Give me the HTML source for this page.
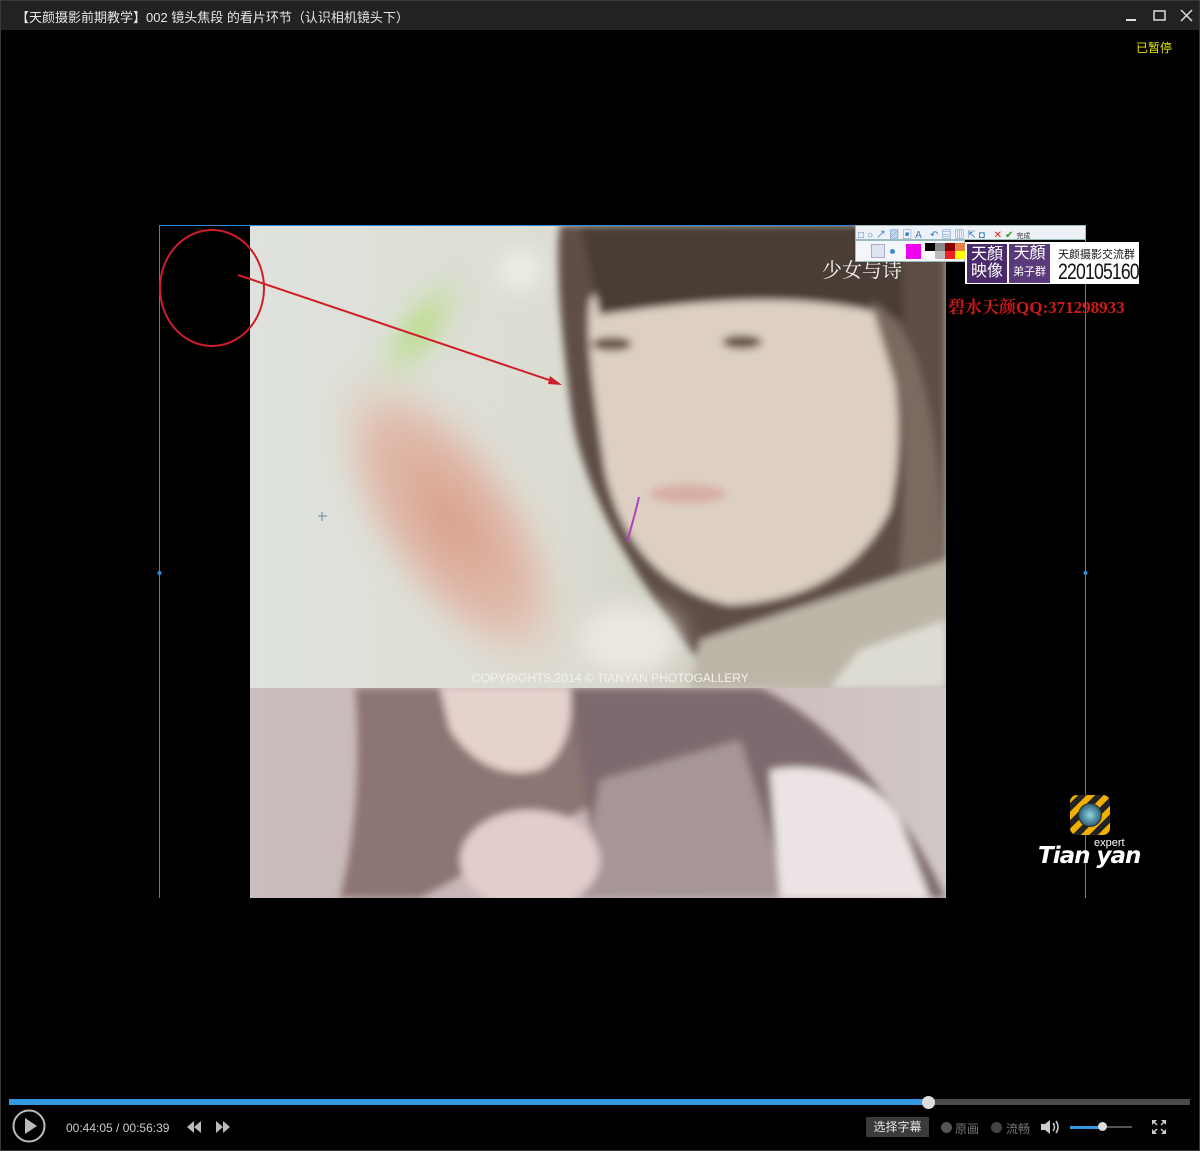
<!DOCTYPE html>
<html><head><meta charset="utf-8">
<style>
*{margin:0;padding:0;box-sizing:border-box}
body{width:1200px;height:1151px;background:#000;position:relative;overflow:hidden;font-family:"Liberation Sans","Noto Sans CJK SC",sans-serif}
.abs{position:absolute}
#title{left:0;top:0;width:1200px;height:30px;background:#222224;border:1px solid #3a3a3a;border-bottom:none}
#title span{position:absolute;left:15px;top:6px;color:#e6e6e6;font-size:13px;white-space:nowrap}
#frame{left:0;top:30px;width:1200px;height:1121px;border:1px solid #3a3a3a;border-top:none}
.t{color:#ccc;font-size:12px;white-space:nowrap}
</style></head><body>
<div id="title" class="abs"><span>【天颜摄影前期教学】002 镜头焦段 的看片环节（认识相机镜头下）</span>
<svg class="abs" style="left:1120px;top:6px" width="75" height="18">
<line x1="5" y1="13" x2="15" y2="13" stroke="#ddd" stroke-width="2"/>
<rect x="33" y="4" width="11" height="9" fill="none" stroke="#ddd" stroke-width="1.5"/>
<line x1="60" y1="3" x2="71" y2="14" stroke="#ddd" stroke-width="1.5"/><line x1="71" y1="3" x2="60" y2="14" stroke="#ddd" stroke-width="1.5"/>
</svg></div>
<div id="frame" class="abs"></div>
<div class="abs" style="left:1136px;top:39px;color:#e8e800;font-size:12px">已暂停</div>

<svg class="abs" style="left:0;top:0" width="1200" height="1151">
<defs>
<linearGradient id="bg1" x1="0" y1="0" x2="1" y2="0"><stop offset="0" stop-color="#dfe3dd"/><stop offset=".45" stop-color="#dcdcd2"/><stop offset="1" stop-color="#b8b5a6"/></linearGradient>
<radialGradient id="hand" cx=".5" cy=".5" r=".5"><stop offset="0" stop-color="#d9a08c"/><stop offset=".6" stop-color="#e0bcac"/><stop offset="1" stop-color="#e2d8cf" stop-opacity="0"/></radialGradient>
<radialGradient id="leaf" cx=".5" cy=".5" r=".5"><stop offset="0" stop-color="#a6d860"/><stop offset="1" stop-color="#cfe4b8" stop-opacity="0"/></radialGradient>
<linearGradient id="bg2" x1="0" y1="0" x2="1" y2="0"><stop offset="0" stop-color="#cbbdbd"/><stop offset=".5" stop-color="#c9b4b4"/><stop offset="1" stop-color="#d2c8c8"/></linearGradient>
<filter id="b4"><feGaussianBlur stdDeviation="4"/></filter>
<filter id="b12"><feGaussianBlur stdDeviation="12"/></filter>
<clipPath id="c1"><rect x="250" y="225" width="696" height="463"/></clipPath>
<clipPath id="c2"><rect x="250" y="688" width="696" height="210"/></clipPath>
</defs>
<g clip-path="url(#c1)">
<rect x="250" y="225" width="696" height="463" fill="url(#bg1)"/>
<g filter="url(#b4)">
<path d="M560 225 L946 225 L946 688 L720 688 C650 600 580 500 570 400 C560 320 555 260 560 225Z" fill="#5e4e46"/>
<path d="M590 300 C620 250 800 250 870 300 C900 360 905 440 890 510 C860 570 810 600 730 605 C660 590 620 540 605 470 C595 400 585 340 590 300Z" fill="#ddd0c2"/>
<path d="M580 225 L900 225 L905 320 C840 300 760 290 600 315Z" fill="#4a3c36"/>
<path d="M870 300 C920 330 946 400 946 688 L880 688 C900 600 910 500 900 400Z" fill="#7a6a60"/>
<path d="M700 640 L946 560 L946 688 L690 688Z" fill="#bdb6a8"/>
<path d="M860 650 L946 620 L946 688 L830 688Z" fill="#deddd4"/>
<ellipse cx="742" cy="342" rx="20" ry="7" fill="#6b5548"/><ellipse cx="612" cy="344" rx="20" ry="7" fill="#6b5548"/>
<ellipse cx="688" cy="494" rx="38" ry="10" fill="#d8aea4"/>
</g>
<g filter="url(#b12)">
<ellipse cx="450" cy="520" rx="190" ry="85" fill="url(#hand)" transform="rotate(55 450 520)"/>
<ellipse cx="420" cy="330" rx="28" ry="80" fill="url(#leaf)" transform="rotate(35 420 330)"/>
<ellipse cx="630" cy="640" rx="50" ry="35" fill="#ece8e0"/>
<circle cx="520" cy="270" r="20" fill="#f0f0ea"/>
</g>
</g>
<g clip-path="url(#c2)">
<rect x="250" y="688" width="696" height="210" fill="url(#bg2)"/>
<g filter="url(#b4)">
<path d="M355 688 L560 688 C600 720 610 760 600 800 L420 898 L340 898 C360 820 360 740 355 688Z" fill="#8c7472"/>
<path d="M440 688 L570 688 C575 730 560 760 540 770 C500 780 470 760 450 730Z" fill="#e6d2cc"/>
<path d="M570 688 L760 688 C830 720 900 800 946 898 L600 898 C590 820 580 760 570 688Z" fill="#7e6a6e"/>
<path d="M600 780 L740 740 L790 898 L580 898Z" fill="#a69696"/>
<path d="M770 770 C820 760 880 780 900 820 L930 898 L780 898Z" fill="#ece4e4"/>
<ellipse cx="530" cy="860" rx="70" ry="50" fill="#e2cccc"/>
</g>
</g>
<text x="472" y="682" font-size="12" fill="#f4f2ee" font-family="Liberation Sans">COPYRIGHTS.2014 © TIANYAN PHOTOGALLERY</text>
<text x="822" y="277" font-size="20" fill="#f6f4f0" font-family="Noto Serif CJK SC,serif">少女与诗</text>
<line x1="159.5" y1="225" x2="159.5" y2="898" stroke="#2f8ad8" stroke-width="1"/>
<line x1="1085.5" y1="225" x2="1085.5" y2="898" stroke="#2f8ad8" stroke-width="1"/>
<line x1="159" y1="225.5" x2="1086" y2="225.5" stroke="#2f8ad8" stroke-width="1"/>
<circle cx="159.5" cy="573" r="2" fill="#2f8ad8"/><circle cx="1085.5" cy="573" r="2" fill="#2f8ad8"/>
<ellipse cx="212" cy="288" rx="52" ry="58" fill="none" stroke="#d01e28" stroke-width="2"/>
<line x1="238" y1="275" x2="558" y2="383" stroke="#d01e28" stroke-width="2"/>
<path d="M562 385 L550 376 L548 384Z" fill="#d01e28"/>
<path d="M639 497 C636 510 632 525 627 542" stroke="#b040c0" stroke-width="2" fill="none"/>
<path d="M322 512 v9 M318 516 h9" stroke="#6a8aa0" stroke-width="1"/>
</svg>

<div class="abs" style="left:855px;top:225px;width:231px;height:15px;background:#eef2f7;border:1px solid #9bb"></div>
<div class="abs t" style="left:858px;top:226px;font-size:10px;color:#3a7ac0;letter-spacing:3px">□○↗▨▣A ↶▤▥⇱◘ <span style="color:#d22">✕</span><span style="color:#2a2">✔</span><span style="color:#333;letter-spacing:0;font-size:7px">完成</span></div>
<div class="abs" style="left:855px;top:240px;width:110px;height:22px;background:#f4f6f9;border:1px solid #9bb"></div>
<div class="abs" style="left:871px;top:244px;width:14px;height:14px;background:#dde6f0;border:1px solid #aac"></div>
<div class="abs" style="left:890px;top:249px;width:5px;height:5px;border-radius:50%;background:#3a8fd8"></div>
<div class="abs" style="left:906px;top:244px;width:15px;height:15px;background:#f000f0"></div>
<div class="abs" style="left:925px;top:243px;width:40px;height:16px;background:linear-gradient(90deg,#000 0 25%,#888 25% 50%,#800 50% 75%,#e98040 75%)"></div>
<div class="abs" style="left:925px;top:251px;width:40px;height:8px;background:linear-gradient(90deg,#fff 0 25%,#bbb 25% 50%,#e22 50% 75%,#ff0 75%)"></div>
<div class="abs" style="left:965px;top:242px;width:174px;height:42px;background:#fff"></div>
<div class="abs" style="left:967px;top:244px;width:40px;height:39px;background:#4a2a6a;color:#fff;font-size:16px;line-height:17px;text-align:center;padding-top:2px">天顏<br>映像</div>
<div class="abs" style="left:1009px;top:244px;width:41px;height:39px;background:#5a3a7a;color:#fff;font-size:16px;line-height:17px;text-align:center;padding-top:1px">天顏<br><span style="font-size:11px">弟子群</span></div>
<div class="abs" style="left:1058px;top:246px;color:#111;font-size:11px">天颜摄影交流群</div>
<div class="abs" style="left:1058px;top:259px;color:#111;font-size:22px;letter-spacing:-1px;transform:scaleX(.8);transform-origin:left">220105160</div>
<div class="abs" style="left:948px;top:293px;color:#d01818;font-size:17px;font-weight:bold;font-family:'Liberation Serif','Noto Serif CJK SC',serif">碧水天颜QQ:371298933</div>

<div class="abs" style="left:1070px;top:795px;width:40px;height:40px;border-radius:7px;background:repeating-linear-gradient(135deg,#f0b000 0 6px,#222 6px 12px)"></div>
<div class="abs" style="left:1078px;top:803px;width:24px;height:24px;border-radius:50%;background:radial-gradient(#8cd8e8,#3a6a80 60%,#222 70%)"></div>
<div class="abs" style="left:1094px;top:837px;color:#fff;font-size:11px">expert</div>
<div class="abs" style="left:1038px;top:843px;color:#fff;font-size:23px;font-style:italic;font-weight:bold;font-family:'DejaVu Sans',sans-serif;letter-spacing:-1px">Tian yan</div>

<div class="abs" style="left:9px;top:1099px;width:1181px;height:6px;background:#4a4a4c"></div>
<div class="abs" style="left:9px;top:1099px;width:919px;height:6px;background:#3399e0"></div>
<div class="abs" style="left:922px;top:1096px;width:13px;height:13px;border-radius:50%;background:#ddd"></div>
<svg class="abs" style="left:12px;top:1109px" width="36" height="36"><circle cx="17" cy="17" r="15.5" fill="none" stroke="#bbb" stroke-width="2"/><path d="M13 9 L25 17 L13 25Z" fill="#bbb"/></svg>
<div class="abs t" style="left:66px;top:1121px">00:44:05 / 00:56:39</div>
<svg class="abs" style="left:186px;top:1120px" width="48" height="16"><path d="M1 7 L8 1 V13Z M8 7 L15 1 V13Z M30 1 L37 7 L30 13Z M37 1 L44 7 L37 13Z" fill="#bbb"/></svg>
<div class="abs" style="left:866px;top:1117px;width:63px;height:20px;background:#3a3a3c;color:#e6e6e6;font-size:12px;text-align:center;line-height:20px">选择字幕</div>
<div class="abs" style="left:941px;top:1122px;width:11px;height:11px;border-radius:50%;background:#555"></div>
<div class="abs t" style="left:955px;top:1120px;color:#777">原画</div>
<div class="abs" style="left:991px;top:1122px;width:11px;height:11px;border-radius:50%;background:#444"></div>
<div class="abs t" style="left:1006px;top:1120px;color:#777">流畅</div>
<svg class="abs" style="left:1040px;top:1119px" width="22" height="16"><path d="M1 5 H5 L10 1 V15 L5 11 H1Z" fill="#ccc"/><path d="M13 4 Q16 8 13 12 M16 2 Q20 8 16 14" stroke="#ccc" stroke-width="1.5" fill="none"/></svg>
<div class="abs" style="left:1070px;top:1126px;width:62px;height:2px;background:#555"></div>
<div class="abs" style="left:1070px;top:1126px;width:33px;height:3px;background:#3399e0"></div>
<div class="abs" style="left:1098px;top:1122px;width:9px;height:9px;border-radius:50%;background:#ddd"></div>
<svg class="abs" style="left:1151px;top:1119px" width="16" height="16"><path d="M1 1 H6 L1 6Z M15 1 H10 L15 6Z M1 15 H6 L1 10Z M15 15 H10 L15 10Z" fill="#ccc"/><path d="M2 2 L6 6 M14 2 L10 6 M2 14 L6 10 M14 14 L10 10" stroke="#ccc" stroke-width="1.5"/></svg>
</body></html>
